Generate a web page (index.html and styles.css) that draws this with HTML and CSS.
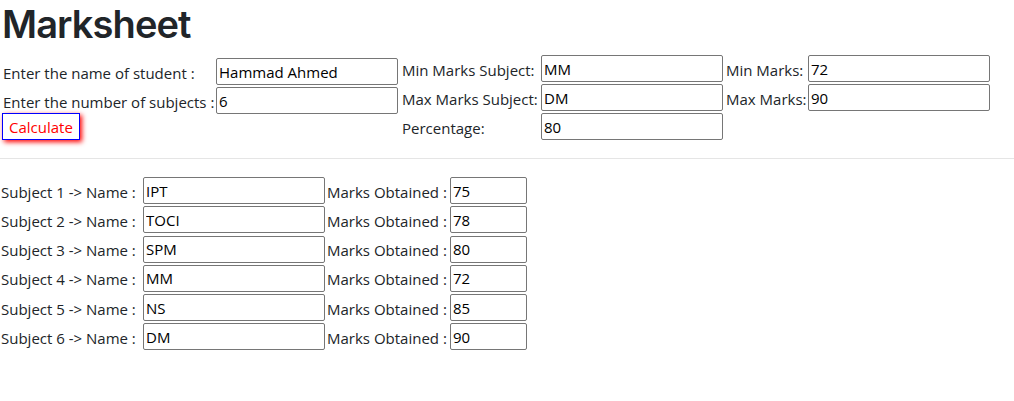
FILE: index.html
```html
<!DOCTYPE html>
<html lang="en">
<head>
<meta charset="utf-8">
<title>Marksheet</title>
<link rel="stylesheet" href="styles.css">
</head>
<body>
<h1 class="title">Marksheet</h1>
<section class="top">
  <div class="group group-student">
    <label class="lbl">Enter the name of student :</label>
    <input class="field" type="text" value="Hammad Ahmed">
    <label class="lbl">Enter the number of subjects :</label>
    <input class="field" type="text" value="6">
    <button class="calc" type="button">Calculate</button>
  </div>
  <div class="group group-subject">
    <label class="lbl">Min Marks Subject:</label>
    <input class="field" type="text" value="MM">
    <label class="lbl">Max Marks Subject:</label>
    <input class="field" type="text" value="DM">
    <label class="lbl">Percentage:</label>
    <input class="field" type="text" value="80">
  </div>
  <div class="group group-marks">
    <label class="lbl">Min Marks:</label>
    <input class="field" type="text" value="72">
    <label class="lbl">Max Marks:</label>
    <input class="field" type="text" value="90">
  </div>
</section>
<hr class="divider">
<section class="subjects">
  <label class="lbl">Subject 1 -&gt; Name :</label><input class="field" type="text" value="IPT"><label class="lbl lbl-marks">Marks Obtained :</label><input class="field field-marks" type="text" value="75">
  <label class="lbl">Subject 2 -&gt; Name :</label><input class="field" type="text" value="TOCI"><label class="lbl lbl-marks">Marks Obtained :</label><input class="field field-marks" type="text" value="78">
  <label class="lbl">Subject 3 -&gt; Name :</label><input class="field" type="text" value="SPM"><label class="lbl lbl-marks">Marks Obtained :</label><input class="field field-marks" type="text" value="80">
  <label class="lbl">Subject 4 -&gt; Name :</label><input class="field" type="text" value="MM"><label class="lbl lbl-marks">Marks Obtained :</label><input class="field field-marks" type="text" value="72">
  <label class="lbl">Subject 5 -&gt; Name :</label><input class="field" type="text" value="NS"><label class="lbl lbl-marks">Marks Obtained :</label><input class="field field-marks" type="text" value="85">
  <label class="lbl">Subject 6 -&gt; Name :</label><input class="field" type="text" value="DM"><label class="lbl lbl-marks">Marks Obtained :</label><input class="field field-marks" type="text" value="90">
</section>
</body>
</html>
```
FILE: styles.css
```css
html, body {
  margin: 0;
  padding: 0;
  background: #ffffff;
}

body {
  font-family: "Open Sans", "Noto Sans", sans-serif;
  font-size: 15px;
  color: #212529;
}

.title {
  margin: 0 0 7px 2px;
  font-family: Inter, "Open Sans", sans-serif;
  font-size: 38px;
  line-height: 48px;
  font-weight: 600;
  letter-spacing: -0.9px;
  color: #212529;
}

.top {
  display: flex;
  align-items: flex-start;
  margin-left: 2px;
  gap: 3px;
}

.group {
  display: grid;
  row-gap: 2px;
  align-items: center;
}

.group-student {
  width: 396px;
  grid-template-columns: 214px 182px;
  padding-top: 3px;
}

.group-subject {
  width: 322px;
  grid-template-columns: 140px 182px;
}

.group-marks {
  width: 265px;
  grid-template-columns: 83px 182px;
  margin-left: -1px;
}

.lbl {
  white-space: nowrap;
  padding-top: 2px;
  padding-left: 1px;
}

.field {
  box-sizing: border-box;
  width: 182px;
  height: 27px;
  margin: 0;
  padding: 0 2px;
  border: 1px solid #767676;
  border-radius: 2px;
  font-family: inherit;
  font-size: 15px;
  color: #000000;
  background: #ffffff;
}

.calc {
  grid-column: 1 / 2;
  justify-self: start;
  box-sizing: border-box;
  height: 27px;
  margin: -3px 0 0 0;
  padding: 0 6px;
  border: 1px solid #0000ff;
  border-radius: 0;
  background: #ffffff;
  color: #ff0000;
  font-family: inherit;
  font-size: 15px;
  box-shadow: 2px 2px 5px #ff0000;
}

.divider {
  margin: 18px 0 18px 0;
  border: 0;
  border-top: 1px solid #e5e5e5;
  height: 0;
}

.subjects {
  display: grid;
  grid-template-columns: 143px 182px 125px 77px;
  row-gap: 2.25px;
  align-items: center;
}

.lbl-marks {
  padding-left: 2px;
}

.field-marks {
  width: 77px;
}
```
